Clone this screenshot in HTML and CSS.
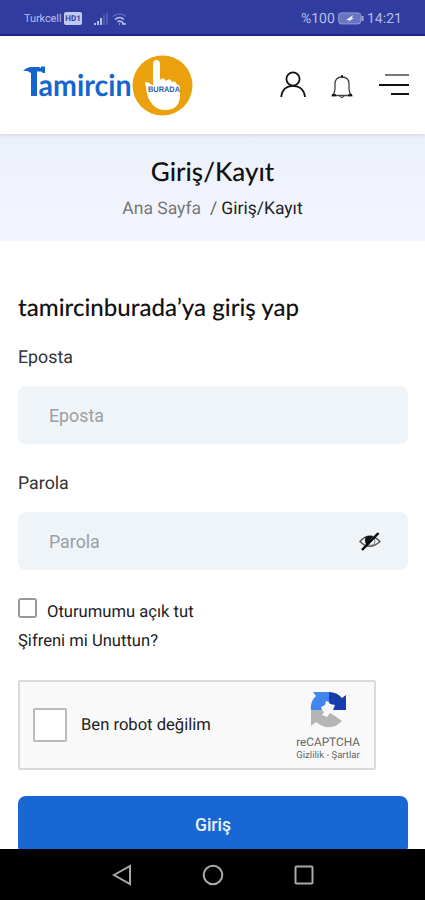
FILE: index.html
```html
<!DOCTYPE html>
<html lang="tr">
<head>
<meta charset="utf-8">
<meta name="viewport" content="width=device-width, initial-scale=1">
<title>Giriş/Kayıt</title>
<link rel="stylesheet" href="styles.css">
</head>
<body>
<div class="screen">
  <div class="status">
    <span class="carrier">Turkcell</span>
    <span class="volte">HD1</span>
    <svg class="signal" width="14" height="14" viewBox="0 0 14 14"><path d="M1 13v-2M4 13V9M7 13V6" stroke="#b9bee8" stroke-width="2"/><path d="M10 13V3M13 13V1" stroke="#5965bb" stroke-width="1.5"/></svg>
    <svg class="wifi" width="15" height="14" viewBox="0 0 15 14" fill="none"><path d="M1 4.500Q7.500-1 14 4.500" stroke="#6874c5" stroke-width="1.200"/><path d="M3 7.500Q7.500 3.500 12 7.500M5.500 10Q7.500 8 9 10" stroke="#bdc2ea" stroke-width="1.500"/><path d="M7 12h1M10 12h4M9 9l3 3" stroke="#bdc2ea" stroke-width="1.500"/></svg>
    <span class="percent">%100</span>
    <svg class="battery" width="26" height="13" viewBox="0 0 26 13"><rect x=".7" y=".9" width="22" height="11" rx="2.500" fill="#6873c1" stroke="#939bd7"/><path d="M24.500 4v5" stroke="#a5acdf" stroke-width="2"/><path d="m8 8 7-5-1 3 2 0-6 4 1-2z" fill="#e4e7fc"/></svg>
    <span class="clock">14:21</span>
  </div>
  <header class="header">
    <svg class="logo" width="170" height="62" viewBox="0 0 170 62">
      <path d="M0 17Q4 12.500 10 13H16L18 14V12.500H22V19H20L18 17.500H14V42H8V19Q4 16 0 17z" fill="#1565ce"/>
      <text class="logo-name" x="15.500" y="42" textLength="93" lengthAdjust="spacingAndGlyphs">amircin</text>
      <circle cx="139.500" cy="31.500" r="30" fill="#eaa10b"/>
      <path d="M130 32V11Q130 6 133.500 6T137 11V26Q140 22 143 27Q147 23 149 28Q153 26 154 31Q157 30 157 36V43Q156 56 142 56Q132 56 127 47Q124 43 123 33Q121 28 123 28Q126 28 130 32z" fill="#fff"/>
      <text class="logo-tag" x="125" y="38.300" textLength="32" lengthAdjust="spacingAndGlyphs">BURADA</text>
    </svg>
    <svg class="user" width="28" height="28" viewBox="0 0 28 28" fill="none" stroke="#111" stroke-width="1.800"><circle cx="14" cy="8" r="6.600"/><path d="M2.200 26C3 19 7.500 14.800 14 14.800S25.200 19 26 26"/></svg>
    <svg class="bell" width="22" height="25" viewBox="0 0 22 25" fill="none" stroke="#444" stroke-width="1.300"><path d="M1.500 21.500Q4 19 4 15V10Q4 3 11 3T18 10V15Q18 19 20.500 21.500z"/><path d="M11 1v2M9 22Q11 25 13 22"/><path d="M1 21.200h4M17 21.200h4M10 2.500h2" stroke="#111" stroke-width="2"/></svg>
    <svg class="menu" width="30" height="24" viewBox="0 0 30 24"><path d="M6 2h24" stroke="#777" stroke-width="2"/><path d="M0 12h30M12 21h18" stroke="#111" stroke-width="2"/></svg>
  </header>
  <section class="banner">
    <h1><span>Giriş/Kayıt</span></h1>
    <p><span class="crumb">Ana Sayfa</span><span class="slash">/</span><span class="current">Giriş/Kayıt</span></p>
  </section>
  <main class="form">
    <h2>tamircinburada’ya giriş yap</h2>
    <label class="label" for="mail">Eposta</label>
    <div class="field"><input id="mail" placeholder="Eposta"></div>
    <label class="label" for="pass">Parola</label>
    <div class="field"><input id="pass" placeholder="Parola">
      <svg width="22" height="20" viewBox="0 0 22 20" fill="none"><path d="M1 10.500Q10.500 0 21 10.500Q10.500 20 1 10.500z" stroke="#555" stroke-width="1.400"/><circle cx="12" cy="10.500" r="4" stroke="#777"/><path d="M6.500 6Q5 12 8 14L14 5Q10 4 6.500 6z" fill="#111"/><path d="M3 19 19.500 2" stroke="#050505" stroke-width="2.500"/></svg>
    </div>
    <div class="remember"><span class="box"></span><span>Oturumumu açık tut</span></div>
    <a class="forgot">Şifreni mi Unuttun?</a>
    <div class="captcha">
      <span class="captcha-box"></span>
      <span class="robot">Ben robot değilim</span>
      <div class="brand">
        <svg width="37" height="37" viewBox="0 0 37 37"><path d="M1 19Q0 10 6 5L3 1H19V11L16 10L15 14L11 16L12 19z" fill="#4285ed"/><path d="M19 1Q27 1 32 7L36 4V19H23L25 14L20 13L19 11z" fill="#173cac"/><path d="M1 19H12L14 21L12 24L17 26L20 22L25 25L32 30Q20 42 6 31L1 35z" fill="#b5b5b5"/></svg>
        <span class="name">reCAPTCHA</span><span class="terms">Gizlilik - Şartlar</span>
      </div>
    </div>
    <button class="submit">Giriş</button>
  </main>
  <nav class="nav">
    <svg width="20" height="22" viewBox="0 0 20 22"><path d="M2 11 18 2V20z"/></svg>
    <svg width="22" height="22" viewBox="0 0 22 22"><circle cx="11" cy="11" r="9.300"/></svg>
    <svg width="20" height="20" viewBox="0 0 20 20"><rect x="1.500" y="1.500" width="17" height="17" rx="1"/></svg>
  </nav>
</div>
</body>
</html>
```
FILE: styles.css
```css
* { box-sizing: border-box; }
body { margin: 0; background: #fff; font-family: Roboto, sans-serif; color: #222; text-rendering: geometricPrecision; }
svg { display: block; flex: none; }
.screen { width: 425px; height: 900px; overflow: hidden; display: flex; flex-direction: column; }
.status { height: 36px; flex: none; background: #303d9f; border-bottom: 2px solid #1c2489; display: flex; align-items: center; padding: 3px 23px 0 24px; color: #b6bce8; white-space: nowrap; }
.carrier { font-size: 11px; width: 40px; letter-spacing: -.1px; }
.volte { width: 18px; height: 13px; background: #c3c8ee; color: #303d9f; border-radius: 2px; font-size: 8px; line-height: 13px; font-weight: 700; text-align: center; }
.signal { margin-left: 12px; }
.wifi { margin-left: 4px; }
.percent { margin-left: auto; font-size: 14px; width: 37px; }
.battery { margin-right: 3px; }
.clock { font-size: 14px; width: 35px; }
.header { height: 98px; flex: none; display: flex; align-items: center; padding: 0 16px 0 23px; background: #fff; z-index: 1; box-shadow: 0 1px 4px rgba(40, 45, 65, .14); }
.logo-name { font: 700 30px Lato, sans-serif; fill: #1565ce; }
.logo-tag { font: 700 8px "Liberation Sans", sans-serif; fill: #2d62aa; }
.user { margin-left: auto; }
.bell { margin: 2px 26px 0 24px; }
.banner { height: 107px; flex: none; background: linear-gradient(#ecf0f9, #f3f6ff); text-align: center; padding-top: 18px; }
h1, h2, p { margin: 0; white-space: nowrap; }
h1 { font: 500 26px/38px Lato, sans-serif; color: #111; }
.banner p { font-size: 17.5px; line-height: 24px; margin-top: 7px; }
.crumb { color: #777; }
.slash { color: #666; margin: 0 4px 0 9px; }
.form { flex: 1; min-height: 0; overflow: hidden; padding: 49px 17px 0 18px; display: flex; flex-direction: column; }
.form > * { flex: none; }
h2 { font: 500 24.1px/36px Lato, sans-serif; color: #111; }
.label { font-size: 17.8px; line-height: 24px; margin-top: 20px; color: #333; }
.field { height: 58px; background: #eff4f8; border-radius: 8px; margin-top: 16px; padding: 0 27px 0 31px; display: flex; align-items: center; }
.field + .label { margin-top: 28px; }
input { flex: 1; min-width: 0; border: 0; padding: 0; background: none; font: 17.8px Roboto, sans-serif; }
input::placeholder { color: #9a9fa2; opacity: 1; }
.remember { height: 24px; margin-top: 28px; display: flex; gap: 10px; font-size: 16.6px; line-height: 29px; }
.box { width: 19px; height: 20px; border: 2px solid #999; border-radius: 3px; }
.forgot { font-size: 16.6px; line-height: 24px; margin-top: 8px; }
.captcha { width: 358px; height: 90px; margin-top: 26px; background: #f9f9f9; border: 2px solid #dadada; border-radius: 2px; display: flex; align-items: center; padding: 0 11px 0 13px; }
.captcha-box { width: 34px; height: 34px; background: #fff; border: 2px solid #bbb; border-radius: 2px; margin-top: -1px; }
.robot { font-size: 16.6px; margin-left: 14px; color: #222; }
.brand { margin-left: auto; width: 70px; height: 78px; display: flex; flex-direction: column; align-items: center; color: #666; white-space: nowrap; padding-top: 5px; }
.name { font-size: 11.8px; line-height: 14px; margin-top: 7px; }
.terms { font-size: 9.6px; line-height: 12px; margin-top: 1px; }
.submit { height: 58px; margin-top: 26px; border: 0; border-radius: 8px; background: #1967d2; color: #eaf2ff; font: 500 17.5px Roboto, sans-serif; }
.nav { height: 51px; flex: none; background: #000; display: flex; justify-content: center; align-items: center; gap: 70px; }
.nav svg { fill: none; stroke: #aaa; stroke-width: 2; }
```
